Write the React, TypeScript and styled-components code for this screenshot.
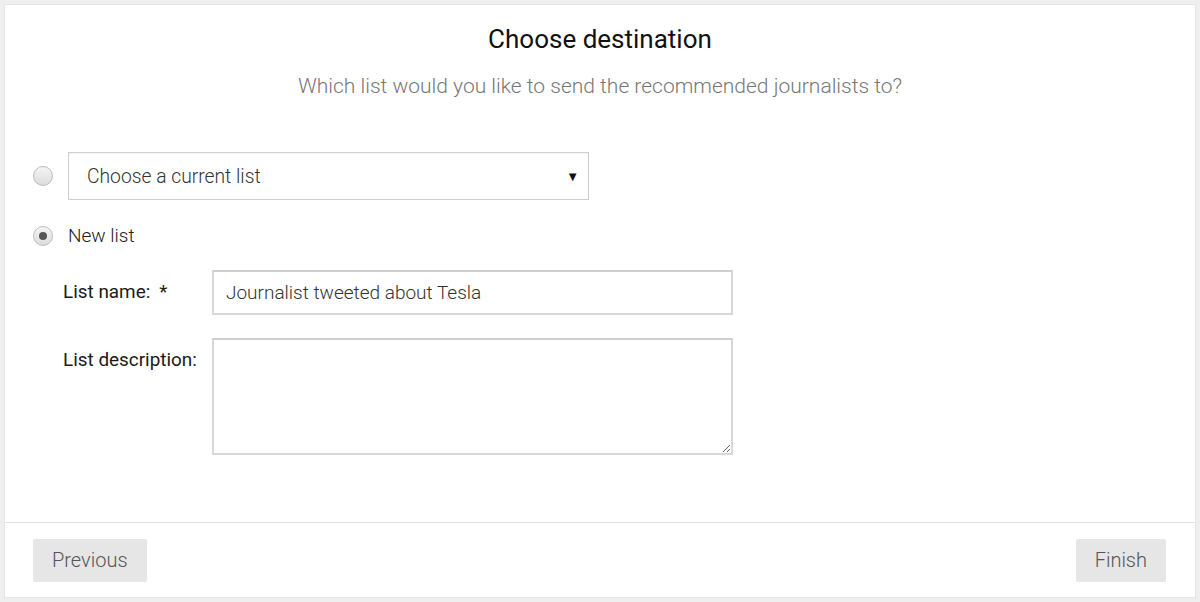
import React from 'react';
import styled, {createGlobalStyle} from 'styled-components';

const GlobalStyle = createGlobalStyle`
    html, body {
        margin: 0;
        padding: 0;
        background: #efefef;
        font-family: Roboto, 'Liberation Sans', Arial, sans-serif;
    }
    * {
        box-sizing: border-box;
    }
`;

const Page = styled.div`
    width: 1200px;
    height: 602px;
    padding: 4px;
`;

const Card = styled.div`
    height: 594px;
    background: #fff;
    border: 1px solid #e4e4e4;
    display: flex;
    flex-direction: column;
`;

const Body = styled.div`
    flex: 1;
    padding: 17px 0 0 28px;
`;

const Title = styled.h1`
    margin: 0 28px 0 0;
    text-align: center;
    font-size: 26px;
    font-weight: 400;
    color: #111;
    line-height: 34px;
`;

const Subtitle = styled.p`
    margin: 16px 28px 0 0;
    text-align: center;
    font-size: 21px;
    font-weight: 300;
    color: #777;
    line-height: 28px;
`;

const OptionRow = styled.label<{top: number}>`
    display: flex;
    align-items: center;
    gap: 15px;
    margin-top: ${p => p.top}px;
    font-size: 19px;
    font-weight: 300;
    color: #222;
`;

const Radio = styled.span<{checked?: boolean}>`
    width: 20px;
    height: 20px;
    border-radius: 50%;
    border: 1px solid #bdbdbd;
    background: linear-gradient(#f4f4f4, #dcdcdc);
    display: inline-flex;
    align-items: center;
    justify-content: center;
    flex: none;

    &::after {
        content: '';
        width: 8px;
        height: 8px;
        border-radius: 50%;
        background: ${p => (p.checked ? '#555' : 'transparent')};
    }
`;

const Select = styled.div`
    width: 521px;
    height: 48px;
    border: 1px solid #cfcfcf;
    box-shadow: inset 0 1px 2px rgba(0, 0, 0, 0.06);
    display: flex;
    align-items: center;
    justify-content: space-between;
    padding: 0 9px 0 18px;
    font-size: 19.3px;
    font-weight: 300;
    color: #333;
`;

const Arrow = styled.span`
    font-size: 13px;
    color: #111;
`;

const Fields = styled.div`
    margin: 23px 0 0 30px;
    display: grid;
    grid-template-columns: 149px 521px;
    row-gap: 23px;
    align-items: start;
`;

const FieldLabel = styled.span`
    font-size: 18.9px;
    font-weight: 400;
    color: #1a1a1a;
    line-height: 22px;
    padding-top: 11px;
`;

const Required = styled.span`
    margin-left: 9px;
`;

const TextInput = styled.div`
    height: 45px;
    border: 2px solid #d8d8d8;
    border-top-color: #cfcfcf;
    padding: 0 12px;
    display: flex;
    align-items: center;
    font-size: 19px;
    font-weight: 300;
    color: #333;
`;

const TextArea = styled.textarea`
    height: 117px;
    border: 2px solid #d8d8d8;
    border-top-color: #cfcfcf;
    resize: vertical;
    font-family: inherit;
    font-size: 19px;
    outline: none;
`;

const Footer = styled.div`
    border-top: 1px solid #e2e2e2;
    height: 75px;
    display: flex;
    align-items: center;
    justify-content: space-between;
    padding: 0 29px 0 28px;
`;

const Button = styled.button`
    height: 43px;
    border: none;
    border-radius: 2px;
    background: #e6e6e6;
    color: #555;
    font-family: inherit;
    font-size: 20px;
    font-weight: 300;
    padding: 0 19px;
`;

export default function App() {
    return (
        <Page>
            <GlobalStyle />
            <Card>
                <Body>
                    <Title>Choose destination</Title>
                    <Subtitle>Which list would you like to send the recommended journalists to?</Subtitle>
                    <OptionRow top={52}>
                        <Radio />
                        <Select>
                            <span>Choose a current list</span>
                            <Arrow>▼</Arrow>
                        </Select>
                    </OptionRow>
                    <OptionRow top={24}>
                        <Radio checked />
                        <span>New list</span>
                    </OptionRow>
                    <Fields>
                        <FieldLabel>
                            List name:<Required>*</Required>
                        </FieldLabel>
                        <TextInput>Journalist tweeted about Tesla</TextInput>
                        <FieldLabel>List description:</FieldLabel>
                        <TextArea />
                    </Fields>
                </Body>
                <Footer>
                    <Button>Previous</Button>
                    <Button>Finish</Button>
                </Footer>
            </Card>
        </Page>
    );
}
